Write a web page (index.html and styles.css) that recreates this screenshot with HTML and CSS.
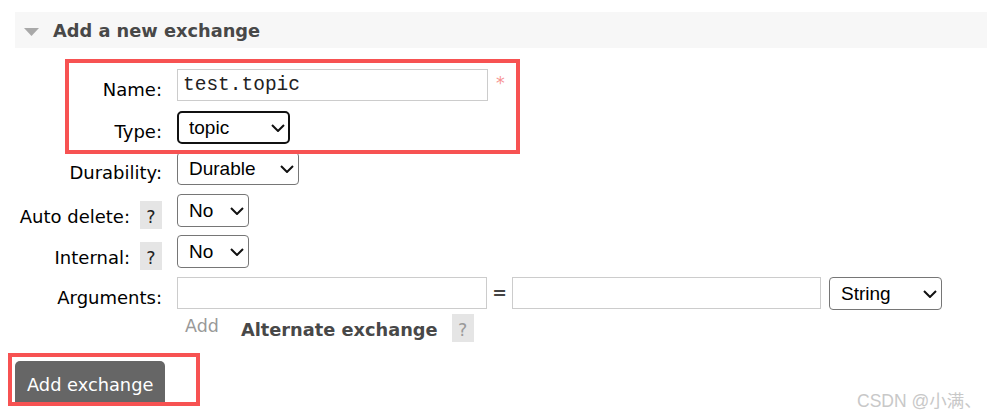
FILE: index.html
```html
<!DOCTYPE html>
<html lang="en">
<head>
<meta charset="utf-8">
<title>Add a new exchange</title>
<link rel="stylesheet" href="styles.css">
</head>
<body>
<div class="page">
  <div class="section-head">
    <svg class="tri" width="15" height="8" viewBox="0 0 15 8"><polygon points="0,0 15,0 7.5,8" fill="#a9a9a9"/></svg>
    <h2 class="section-title">Add a new exchange</h2>
  </div>

  <form class="form">
    <div class="grid">
      <label class="lbl">Name:</label>
      <div class="ctl ctl-top">
        <input class="text w-name" type="text" value="test.topic">
        <span class="req">*</span>
      </div>

      <label class="lbl">Type:</label>
      <div class="ctl">
        <span class="select focus w-type">
          <select><option>topic</option></select>
          <svg class="chev" width="14" height="8" viewBox="0 0 14 8"><path d="M1 1 L7 7 L13 1" fill="none" stroke="#111" stroke-width="2"/></svg>
        </span>
      </div>

      <label class="lbl">Durability:</label>
      <div class="ctl">
        <span class="select w-dur">
          <select><option>Durable</option></select>
          <svg class="chev" width="14" height="8" viewBox="0 0 14 8"><path d="M1 1 L7 7 L13 1" fill="none" stroke="#111" stroke-width="2"/></svg>
        </span>
      </div>

      <label class="lbl lbl-help">Auto delete:<span class="help">?</span></label>
      <div class="ctl">
        <span class="select w-no">
          <select><option>No</option></select>
          <svg class="chev" width="14" height="8" viewBox="0 0 14 8"><path d="M1 1 L7 7 L13 1" fill="none" stroke="#111" stroke-width="2"/></svg>
        </span>
      </div>

      <label class="lbl lbl-help">Internal:<span class="help">?</span></label>
      <div class="ctl">
        <span class="select w-no">
          <select><option>No</option></select>
          <svg class="chev" width="14" height="8" viewBox="0 0 14 8"><path d="M1 1 L7 7 L13 1" fill="none" stroke="#111" stroke-width="2"/></svg>
        </span>
      </div>

      <label class="lbl">Arguments:</label>
      <div class="ctl">
        <input class="text w-arg1" type="text">
        <span class="eq">=</span>
        <input class="text w-arg2" type="text">
        <span class="select w-type arg-type">
          <select><option>String</option></select>
          <svg class="chev" width="14" height="8" viewBox="0 0 14 8"><path d="M1 1 L7 7 L13 1" fill="none" stroke="#111" stroke-width="2"/></svg>
        </span>
      </div>
    </div>

    <div class="extra">
      <span class="add">Add</span>
      <span class="alt">Alternate exchange</span>
      <span class="help muted">?</span>
    </div>

    <button class="btn" type="button">Add exchange</button>
  </form>

  <div class="mark mark-1"></div>
  <div class="mark mark-2"></div>
  <div class="watermark">CSDN @小满、</div>
</div>
</body>
</html>
```

FILE: styles.css
```css
html, body {
  margin: 0;
  padding: 0;
  background: #fff;
}

.page {
  position: relative;
  padding-left: 15px;
  padding-top: 12px;
  font-family: "DejaVu Sans", Verdana, sans-serif;
  font-size: 18px;
  color: #000;
  height: 418px;
  box-sizing: border-box;
  overflow: hidden;
}

.section-head {
  display: flex;
  align-items: center;
  height: 36px;
  background: #f7f7f7;
  padding-left: 9px;
}

.tri {
  margin-top: 3px;
  margin-right: 14px;
  flex: none;
}

.section-title {
  margin: 0;
  font-size: 17.8px;
  font-weight: bold;
  color: #484848;
  line-height: 36px;
  padding-top: 1px;
}

.form {
  margin: 21px 0 0;
}

.grid {
  display: grid;
  grid-template-columns: 147px 1fr;
  grid-auto-rows: 33px;
  column-gap: 15px;
  row-gap: 8.6px;
}

.lbl {
  display: flex;
  justify-content: flex-end;
  align-items: baseline;
  align-self: start;
  padding-top: 11px;
  line-height: 20px;
  color: #000;
  white-space: nowrap;
}

.lbl-help {
  padding-top: 7px;
}

.help {
  display: inline-block;
  width: 22px;
  height: 28px;
  box-sizing: border-box;
  padding-top: 6px;
  line-height: 20px;
  font-size: 17.5px;
  text-align: center;
  background: #e5e5e5;
  color: #222;
  margin-left: 10px;
}

.help.muted {
  color: #9a9a9a;
  margin-left: 14px;
}

.ctl {
  display: flex;
  align-items: center;
  height: 33px;
}

.ctl-top {
  align-items: flex-start;
}

.text {
  height: 32px;
  box-sizing: border-box;
  border: 1px solid #cccccc;
  border-radius: 0;
  padding: 0 5px;
  margin: 0;
  font-family: "Liberation Mono", "Courier New", monospace;
  font-size: 19.5px;
  color: #222;
  background: #fff;
  outline: none;
}

.w-name { width: 311px; }
.w-arg1 { width: 310px; }
.w-arg2 { width: 309px; }

.req {
  margin-left: 8px;
  margin-top: 4px;
  line-height: 20px;
  font-size: 17.5px;
  color: #f79292;
}

.eq {
  width: 25px;
  text-align: center;
  color: #444;
  font-weight: bold;
  font-size: 17.5px;
}

.select {
  display: grid;
  height: 33px;
  flex: none;
}

.select select,
.select .chev {
  grid-area: 1 / 1;
}

.select select {
  appearance: none;
  -webkit-appearance: none;
  width: 100%;
  height: 100%;
  box-sizing: border-box;
  margin: 0;
  padding: 0 24px 0 11px;
  border: 1px solid #767676;
  border-radius: 4px;
  background: #fff;
  font-family: "Liberation Sans", Arial, sans-serif;
  font-size: 19px;
  color: #000;
  outline: none;
}

.select.focus select {
  border: 2px solid #111;
  border-radius: 5px;
  padding-left: 10px;
}

.select .chev {
  justify-self: end;
  align-self: center;
  margin-right: 5px;
  margin-top: 1px;
  pointer-events: none;
}

.w-type { width: 113px; }
.w-dur { width: 122px; }
.w-no { width: 72px; }

.arg-type {
  margin-left: 8px;
}

.extra {
  display: flex;
  align-items: flex-start;
  margin-left: 162px;
  margin-top: 4px;
  line-height: 20px;
}

.add {
  margin-left: 8px;
  margin-top: 2px;
  font-size: 17.5px;
  color: #999;
}

.alt {
  margin-left: 22px;
  margin-top: 6px;
  font-size: 17.8px;
  font-weight: bold;
  color: #484848;
}

.btn {
  display: block;
  margin-top: 19px;
  padding: 14px 12px 8px;
  border: 0;
  border-radius: 5px 5px 0 0;
  background: #666;
  color: #fff;
  font-family: "DejaVu Sans", Verdana, sans-serif;
  font-size: 17.8px;
  line-height: 20px;
  cursor: pointer;
}

.mark {
  position: absolute;
  box-sizing: border-box;
  border: 4px solid #f75252;
  pointer-events: none;
}

.mark-1 {
  left: 65px;
  top: 59px;
  width: 455px;
  height: 95px;
}

.mark-2 {
  left: 8px;
  top: 353px;
  width: 192px;
  height: 53px;
}

.watermark {
  position: absolute;
  left: 857px;
  top: 391px;
  font-family: "Liberation Sans", Arial, "Noto Sans CJK SC", sans-serif;
  font-size: 17.5px;
  line-height: 20px;
  color: #c8c8c8;
  white-space: nowrap;
}
```
